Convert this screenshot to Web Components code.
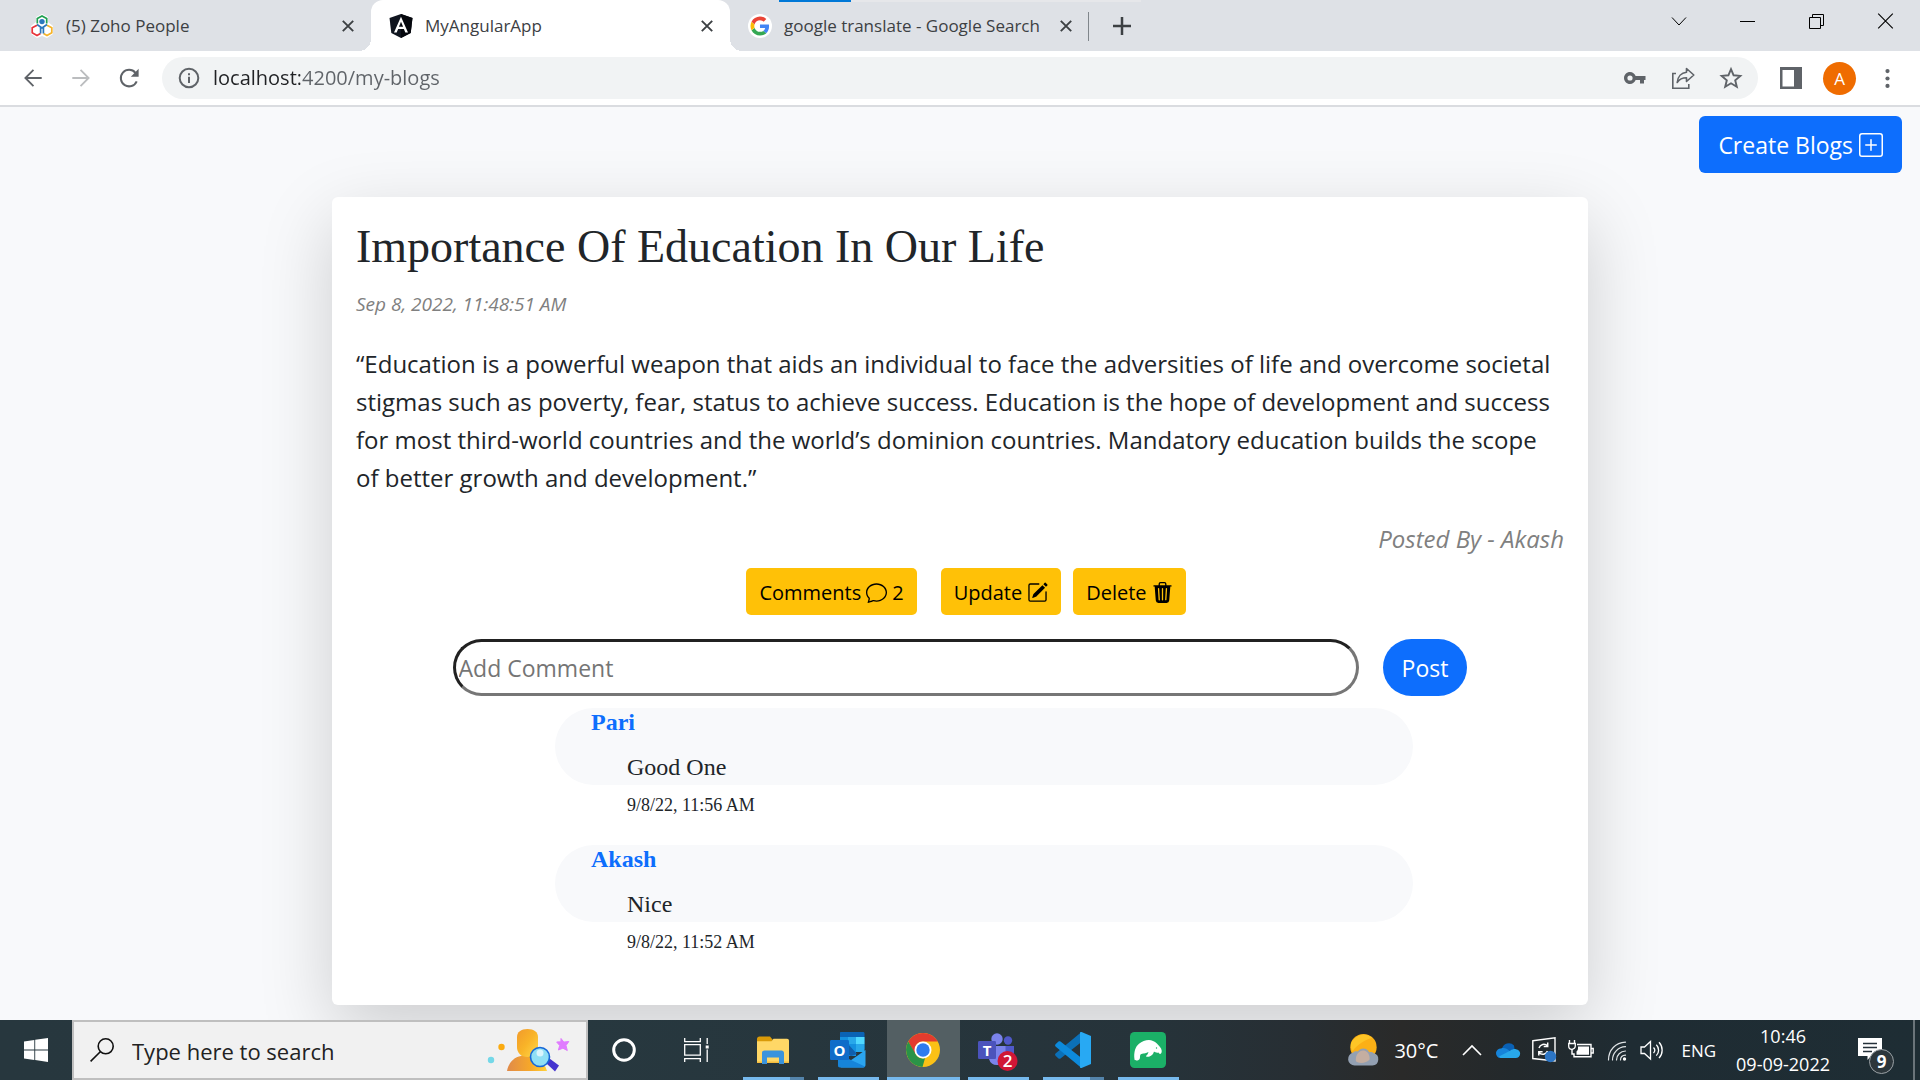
<!DOCTYPE html>
<html lang="en">
<head>
<meta charset="utf-8">
<title>MyAngularApp</title>
<style>
  html, body { margin: 0; height: 100%; }
  body { font-family: "Open Sans", "Noto Sans", sans-serif; color: #212529; background: #f8f9fb; }
</style>
</head>
<body>
<desktop-screen>
  <browser-tabs slot="chrome">
    <browser-tab icon="zoho">(5) Zoho People</browser-tab>
    <browser-tab icon="angular" active>MyAngularApp</browser-tab>
    <browser-tab icon="google" last>google translate - Google Search</browser-tab>
  </browser-tabs>
  <browser-toolbar slot="chrome" url="localhost:4200/my-blogs"></browser-toolbar>
  <blog-page>
    <blog-card heading="Importance Of Education In Our Life" date="Sep 8, 2022, 11:48:51 AM" author="Akash" count="2">
      “Education is a powerful weapon that aids an individual to face the adversities of life and overcome societal stigmas such as poverty, fear, status to achieve success. Education is the hope of development and success for most third-world countries and the world’s dominion countries. Mandatory education builds the scope of better growth and development.”
      <comment-item slot="comments" author="Pari" date="9/8/22, 11:56 AM">Good One</comment-item>
      <comment-item slot="comments" author="Akash" date="9/8/22, 11:52 AM">Nice</comment-item>
    </blog-card>
  </blog-page>
  <task-bar slot="taskbar">
    <task-app icon="explorer" label="File Explorer" stacked></task-app>
    <task-app icon="outlook" label="Outlook"></task-app>
    <task-app icon="chrome" label="Google Chrome" active></task-app>
    <task-app icon="teams" label="Teams"></task-app>
    <task-app icon="vscode" label="Visual Studio Code" stacked></task-app>
    <task-app icon="manatee" label="Tracker"></task-app>
  </task-bar>
</desktop-screen>

<script>
// Each entry: [viewBox width, viewBox height, markup]
const ICONS = {
  plusSquare: [16, 16, `<g fill="currentColor"><path d="M14 1a1 1 0 0 1 1 1v12a1 1 0 0 1-1 1H2a1 1 0 0 1-1-1V2a1 1 0 0 1 1-1h12zM2 0a2 2 0 0 0-2 2v12a2 2 0 0 0 2 2h12a2 2 0 0 0 2-2V2a2 2 0 0 0-2-2H2z"/><path d="M8 4a.5.5 0 0 1 .5.5v3h3a.5.5 0 0 1 0 1h-3v3a.5.5 0 0 1-1 0v-3h-3a.5.5 0 0 1 0-1h3v-3A.5.5 0 0 1 8 4z"/></g>`],
  chat: [16, 16, `<path fill="currentColor" d="M2.678 11.894a1 1 0 0 1 .287.801 10.97 10.97 0 0 1-.398 2c1.395-.323 2.247-.697 2.634-.893a1 1 0 0 1 .71-.074A8.06 8.06 0 0 0 8 14c3.996 0 7-2.807 7-6 0-3.192-3.004-6-7-6S1 4.808 1 8c0 1.468.617 2.83 1.678 3.894zm-.493 3.905a21.682 21.682 0 0 1-.713.129c-.2.032-.352-.176-.273-.362a9.68 9.68 0 0 0 .244-.637l.003-.01c.248-.72.45-1.548.524-2.319C.743 11.37 0 9.76 0 8c0-3.866 3.582-7 8-7s8 3.134 8 7-3.582 7-8 7a9.06 9.06 0 0 1-2.347-.306c-.52.263-1.639.742-3.468 1.105z"/>`],
  pencil: [16, 16, `<g fill="currentColor"><path d="M15.502 1.94a.5.5 0 0 1 0 .706L14.459 3.69l-2-2L13.502.646a.5.5 0 0 1 .707 0l1.293 1.293zm-1.75 2.456-2-2L4.939 9.21a.5.5 0 0 0-.121.196l-.805 2.414a.25.25 0 0 0 .316.316l2.414-.805a.5.5 0 0 0 .196-.12l6.813-6.814z"/><path d="M1 13.5A1.5 1.5 0 0 0 2.5 15h11a1.5 1.5 0 0 0 1.5-1.5v-6a.5.5 0 0 0-1 0v6a.5.5 0 0 1-.5.5h-11a.5.5 0 0 1-.5-.5v-11a.5.5 0 0 1 .5-.5H9a.5.5 0 0 0 0-1H2.5A1.5 1.5 0 0 0 1 2.5v11z"/></g>`],
  trash: [16, 16, `<path fill="currentColor" d="M11 1.5v1h3.5a.5.5 0 0 1 0 1h-.538l-.853 10.66A2 2 0 0 1 11.115 16h-6.23a2 2 0 0 1-1.994-1.84L2.038 3.5H1.5a.5.5 0 0 1 0-1H5v-1A1.5 1.5 0 0 1 6.5 0h3A1.5 1.5 0 0 1 11 1.5Zm-5 0v1h4v-1a.5.5 0 0 0-.5-.5h-3a.5.5 0 0 0-.5.5ZM4.5 5.029l.5 8.5a.5.5 0 1 0 .998-.06l-.5-8.5a.5.5 0 1 0-.998.06Zm6.53-.528a.5.5 0 0 0-.528.47l-.5 8.5a.5.5 0 0 0 .998.058l.5-8.5a.5.5 0 0 0-.47-.528ZM8 4.5a.5.5 0 0 0-.5.5v8.5a.5.5 0 0 0 1 0V5a.5.5 0 0 0-.5-.5Z"/>`],
  back: [24, 24, `<path fill="none" stroke="currentColor" stroke-width="2" d="M21.500 12H4M12.500 3.200L3.700 12l8.800 8.800"/>`],
  forward: [24, 24, `<path fill="none" stroke="currentColor" stroke-width="2" d="M2.500 12H20M11.500 3.200l8.800 8.800-8.800 8.800"/>`],
  reload: [24, 24, `<path fill="none" stroke="currentColor" stroke-width="2.200" d="M20.400 15.600A9 9 0 1 1 19 6.300"/><path fill="currentColor" d="M22.500 2v8.500H14z"/>`],
  info: [22, 22, `<circle cx="11" cy="11" r="9.300" fill="none" stroke="currentColor" stroke-width="2"/><path fill="currentColor" d="M10 9.800h2V16h-2zM10 6.200h2v2h-2z"/>`],
  key: [24, 24, `<path fill="currentColor" fill-rule="evenodd" d="M12.650 10C11.830 7.670 9.610 6 7 6c-3.310 0-6 2.690-6 6s2.690 6 6 6c2.610 0 4.830-1.670 5.650-4H17v3.500h4V14h1.500v-4H12.650zM7 14.600a2.600 2.600 0 1 1 0-5.200 2.600 2.600 0 0 1 0 5.200z"/>`],
  share: [24, 24, `<g fill="none" stroke="currentColor" stroke-width="1.600"><path d="M5 7.500H1.800v14.700h16V18"/><path stroke-linejoin="round" d="M15.500 2.500l7.300 6.500-7.300 6.500v-3.700C10.500 11.800 8 13.800 6.200 16.500 6.700 10.500 10.500 6.700 15.500 6.200z"/></g>`],
  star: [24, 24, `<path fill="none" stroke="currentColor" stroke-width="1.900" d="M12 3.200l2.600 6.100 6.700.6-5.100 4.400 1.600 6.500L12 17.300l-5.800 3.500 1.600-6.500-5.100-4.400 6.700-.6z"/>`],
  panel: [24, 24, `<path fill="currentColor" fill-rule="evenodd" d="M1 1h22v22H1zM3.500 4v16.500H15V4z"/>`],
  dots: [24, 24, `<g fill="currentColor"><circle cx="12" cy="3.500" r="2.400"/><circle cx="12" cy="12" r="2.400"/><circle cx="12" cy="20.500" r="2.400"/></g>`],
  close: [12, 12, `<path fill="none" stroke="currentColor" stroke-width="1.900" d="M.8.8l10.400 10.400M11.200.8L.8 11.200"/>`],
  plus: [18, 18, `<path fill="none" stroke="currentColor" stroke-width="2.500" d="M9 0v18M0 9h18"/>`],
  winMore: [16, 16, `<path fill="none" stroke="currentColor" stroke-width="1" d="M1 4.500l7 7.500 7-7.500"/>`],
  winMin: [16, 16, `<path fill="none" stroke="currentColor" d="M0 8.500h15"/>`],
  winRestore: [16, 16, `<path fill="none" stroke="currentColor" d="M.5 4.500h11v11H.5zM3.500 4.500v-3h11v11h-3"/>`],
  winClose: [16, 16, `<path fill="none" stroke="currentColor" stroke-width="1.100" d="M.2.700l14.600 14.600M14.800.700L.2 15.300"/>`],
  zoho: [24, 24, `<path fill="#fff" d="M12 0l6 3v5l5 4v8l-6 4-5-2-5 2-6-4v-8l5-4V3z"/><g fill="none" stroke-width="1.700"><path stroke="#1fa050" d="M7.300 9.500V4.600L12 2l4.700 2.600v4.900"/><path stroke="#e8333a" d="M7 11.200l-4.800 2.500v5L7 21.500l3.500-2"/><path stroke="#f6b42a" d="M17 11.200l4.800 2.500v5L17 21.500l-3.500-2"/><path stroke="#2b78bd" d="M7 10.500l5 3.500 5-3.500M10.600 13.500v6M13.400 13.500v6"/></g><circle cx="12" cy="7.600" r="2.700" fill="#2b78bd"/>`],
  angular: [24, 24, `<path fill="#10151f" d="M12 0l11.500 4-1.800 15L12 24l-9.700-5L.5 4z"/><path fill="#05070d" d="M12 0l11.500 4-1.800 15L12 24z"/><path fill="#fff" fill-rule="evenodd" d="M12 2.800L5 18.400h2.700l1.400-3.500h5.800l1.400 3.500H19zm0 5l2.100 4.900H9.900z"/>`],
  google: [24, 24, `<circle cx="12" cy="12" r="12" fill="#fff"/><g transform="translate(2.500 2.500) scale(.79)"><path fill="#4285f4" d="M23.500 12.300c0-.9-.1-1.500-.2-2.300H12v4.500h6.500c-.1 1.100-.8 2.800-2.400 3.900l3.700 2.900c2.300-2.100 3.700-5.200 3.700-9z"/><path fill="#34a853" d="M12 24c3.200 0 6-1.100 8-2.900l-3.900-2.900c-1 .7-2.400 1.200-4.100 1.200-3.200 0-5.900-2.100-6.800-5L1.300 17.300C3.300 21.300 7.300 24 12 24z"/><path fill="#fbbc05" d="M5.200 14.300c-.3-.7-.4-1.500-.4-2.300s.2-1.600.4-2.300L1.300 6.600C.5 8.200 0 10 0 12s.5 3.800 1.300 5.400z"/><path fill="#ea4335" d="M12 4.700c2.300 0 3.800 1 4.700 1.800L20 3.200C18 1.200 15.200 0 12 0 7.300 0 3.300 2.700 1.300 6.600l3.900 3.100c1-2.900 3.600-5 6.800-5z"/></g>`],
  windows: [24, 24, `<path fill="#fff" d="M0 3.400l10.300-1.500v9.600H0zM11.200 1.700L24 0v11.500H11.200zM0 12.400h10.300V22L0 20.600zM11.200 12.400H24V24l-12.800-1.900z"/>`],
  search: [24, 24, `<g fill="none" stroke="#111" stroke-width="1.600"><circle cx="15.700" cy="8.300" r="7.500"/><path d="M10.300 13.700L.6 23.400"/></g>`],
  assistant: [84, 44, `<defs><linearGradient id="g1" x1="0" x2="1" y1="0" y2="1"><stop offset="0" stop-color="#f19a2c"/><stop offset=".5" stop-color="#f9b428"/><stop offset="1" stop-color="#ffd84a"/></linearGradient><linearGradient id="g2" x1="0" x2="1"><stop offset="0" stop-color="#e08a4a"/><stop offset=".6" stop-color="#f7a928"/><stop offset="1" stop-color="#ffd23c"/></linearGradient></defs><path fill="url(#g2)" d="M20 43c1.500-8 7-14 14-15 3-2 8-2 11 0 7 2 13 7 15 15z"/><path fill="url(#g1)" d="M30 9c0-5 4-8 10.500-8S51 4 51 9v10c0 6-4 10-10.500 10S30 25 30 19z"/><circle cx="4" cy="32" r="3.200" fill="#74d8e8"/><circle cx="14.500" cy="19" r="3.200" fill="#fbab10"/><path fill="#4534cf" d="M59 35l3.500-4.500 9.500 7-4 6z"/><circle cx="53" cy="29" r="9.500" fill="#8fdff5" stroke="#1668d8" stroke-width="1.600"/><circle cx="53" cy="25" r="3.500" fill="#d9f5fd"/><path fill="#e07bff" stroke="#e07bff" stroke-linejoin="round" d="M74 10.500l2.800 3.600 5-.6-2.800 4 1.300 5-4.400-2.300-4.500 1.800 1.300-4.500-3-3.500 4.200-.2z"/>`],
  cortana: [24, 24, `<circle cx="12" cy="12" r="10.300" fill="none" stroke="#fff" stroke-width="3"/>`],
  taskview: [24, 24, `<path fill="none" stroke="#fff" stroke-width="1.300" d="M.7 0v3.600h15.600V0M.7 6.700h15.600v10.500H.7zM.7 24v-3.300h15.600V24M23.200 0v6M23.200 11.500V24"/><path fill="#fff" d="M21.700 7.500h3v3h-3z"/>`],
  explorer: [36, 36, `<path fill="#d99a08" d="M2 7c0-1.500 1-2.500 2.500-2.500H15l2.500 3V14H2z"/><path fill="#ffd766" d="M2 9.300h14.500l2-2.500H32c1.200 0 2 .8 2 2V31H2z"/><path fill="#f5bd3e" d="M2 29.500h32V31H2z"/><path fill="#3a93dc" d="M7 32V21c0-1.500 1-2.500 2.500-2.500h17c1.500 0 2.500 1 2.500 2.500v11h-5v-6.500H12V32z"/>`],
  outlook: [36, 36, `<path fill="#0a63b5" d="M11 0h22c1 0 1.500.5 1.500 1.500V17H10V1.500C10 .5 10 0 11 0z"/><path fill="#1490df" d="M10 5h8v7h-8z"/><path fill="#28a8ea" d="M18 5h8v7h-8z"/><path fill="#50d9ff" d="M26 5h8.500v7H26z"/><path fill="#0f78d4" d="M10 12h8v12h-8z"/><path fill="#1490df" d="M18 12h8v12h-8z"/><path fill="#28a8ea" d="M26 12h8.500v8H26z"/><path fill="#0f5fae" d="M18 12l9 10-6 2-8-4z"/><path fill="#2ba5f0" d="M35.500 18v15c0 1.500-1 2.500-2.500 2.500H10.500z"/><path fill="#1684da" d="M8 22l27 12.500c-.5.700-1 1-2 1H10c-1.500 0-2-1-2-2z"/><path fill="#0f6cc9" d="M1.500 8h16c1 0 1.500.5 1.500 1.500v17c0 1-.5 1.500-1.500 1.500h-16C.5 28 0 27.500 0 26.500v-17C0 8.500.5 8 1.500 8z"/><text x="9.500" y="23.500" text-anchor="middle" font-family="Open Sans, sans-serif" font-weight="700" font-size="15" fill="#fff">O</text>`],
  chrome: [36, 36, `<circle cx="18" cy="18" r="17" fill="#fbc116"/><path fill="#e33b2e" d="M3.300 9.500a17 17 0 0 1 29.400 0H18a8.500 8.500 0 0 0-7.400 4.300L10 22z"/><path fill="#2a9347" d="M3.300 9.500l7.400 12.700A8.500 8.500 0 0 0 18 26.500l2-.3L17.500 35A17 17 0 0 1 3.300 9.500z"/><circle cx="18" cy="18" r="8.500" fill="#fff"/><circle cx="18" cy="18" r="6.700" fill="#2f7bee"/>`],
  teams: [40, 40, `<circle cx="30" cy="10.500" r="4.200" fill="#5059c9"/><path fill="#5059c9" d="M25 16h11V26a6 6 0 0 1-11 2z"/><circle cx="19" cy="9" r="5.700" fill="#7b83eb"/><path fill="#7b83eb" d="M11 16h16.500v12a8.500 8.500 0 0 1-16.500 1z"/><path fill="#4b53bc" d="M1.500 11h15c1 0 1.500.5 1.500 1.500v15c0 1-.5 1.500-1.500 1.500h-15C.5 29 0 28.500 0 27.500v-15C0 11.500.5 11 1.500 11z"/><text x="9" y="25.500" text-anchor="middle" font-family="Open Sans, sans-serif" font-weight="700" font-size="15" fill="#fff">T</text><circle cx="29.500" cy="31" r="10" fill="#d01636"/><text x="29.500" y="37" text-anchor="middle" font-family="Open Sans, sans-serif" font-weight="600" font-size="17" fill="#fff">2</text>`],
  vscode: [36, 36, `<path fill="#0b70b8" d="M26.500 0v10L5.500 26.500c-.8.500-1.500.4-2 0L.8 24c-1-.8-1-1.800 0-2.700z"/><path fill="#0d8adb" d="M.8 12c-1 .8-1 1.900 0 2.700L26.500 36V26L5.500 9.500c-.8-.5-1.500-.4-2 0z"/><path fill="#28a9f3" d="M26.500 0L36 4v28l-9.500 4c-1 .3-1.500-.2-1.500-1V1c0-.8.500-1.300 1.500-1z"/>`],
  manatee: [36, 36, `<rect width="36" height="36" rx="4.500" fill="#1bb067"/><path fill="#fff" d="M4.500 27.500C3.500 20 5.500 14.500 9 11.800 13 8.500 19 7 23 9c3 1.200 5 3.500 7 6s2.300 5 1 6.500c-1 1-2 0-2.500-1-1.500.5-3.500 0-4.500-1-.5 2.500-2.500 4.500-4.500 5-1.500.500-3.500.5-3.500-.5 1-1 2-2 2.500-4-3.500 2-5.500 1-8 2.500-1 1.500 0 3-1 4.700-1 1.300-4.500 1.800-5 .3z"/><circle cx="26.500" cy="16" r=".7" fill="#1bb067"/>`],
  weather: [34, 34, `<circle cx="17.500" cy="14" r="14" fill="#fbb016"/><path fill="#ffcf2e" d="M8 5a14 14 0 0 1 19-1C20 6 12 10 6 18 2.500 13 4 8 8 5z" opacity=".7"/><path fill="#93a0b2" d="M8 33.500a7 7 0 0 1-1.500-13.800C8 18 10 18 11.500 18.500c3-4.500 10-4 12 .8 1.500-.5 3.500-.2 4.500.8A6.800 6.800 0 0 1 27 33.500z"/><path fill="#d9b49a" d="M9.500 29c-1-8 5-13 10-11 3 1 5 5 4.500 9-3 4-11 5-14.500 2z" opacity=".7"/>`],
  chevronUp: [20, 20, `<path fill="none" stroke="#fff" stroke-width="1.600" d="M1 15l9-9 9 9"/>`],
  onedrive: [24, 24, `<path fill="#0a61b5" d="M6 11a7 7 0 0 1 12-3.500L19 14 4 16z"/><path fill="#1684da" d="M4.500 20A4.700 4.700 0 0 1 5 10.500c3-1 6 0 8 2l6 7z"/><path fill="#28a8ea" d="M4.500 20h15a4.400 4.400 0 0 0 .5-8.800c-2-.3-4 .3-5.500 1.300L3 18.500z"/>`],
  update: [24, 26, `<path fill="none" stroke="#fff" stroke-width="1.400" d="M.8 3.800L23 .9v23L.8 21.500z"/><path fill="none" stroke="#fff" stroke-width="1.500" d="M7 11a5 5 0 0 1 8.500-2M15.700 5.500v4h-4M15.500 14a5 5 0 0 1-8.500 1.500M6.800 18.500v-3.800h3.800"/><circle cx="18.500" cy="19.500" r="5.700" fill="#2c75c4"/>`],
  battery: [26, 20, `<path fill="none" stroke="#fff" stroke-width="1.400" d="M9 4.500h14v12.300H6v-3.500M23.500 8.500h1.700v4.500h-1.700M1.500 0v3M6.500 0v3M4 9v5h2"/><path fill="#fff" d="M10 6.500h11v8.300H8.500V11.500c1-.8 1.500-2 1.500-3z"/><path fill="none" stroke="#fff" stroke-width="1.300" d="M.7 3.500h6.600V6a3.300 3.300 0 0 1-6.600 0z"/>`],
  wifi: [22, 22, `<g fill="none" stroke="#dfe3e5" stroke-width="1.200" stroke-linecap="round"><path d="M2.500 21C2.500 11 9.500 3.500 19.500 3.200"/><path d="M6.500 21c0-7 5.500-13 13-13.300"/><path d="M10.500 21c0-5 4-8.800 9-9"/><path d="M14.500 21c0-2.800 2-4.600 5-4.800"/></g><circle cx="18.500" cy="20" r="1.700" fill="#fff"/>`],
  volume: [24, 20, `<g fill="none" stroke="#fff" stroke-width="1.300"><path d="M1 7v6.500h3.500l6 5.500V1.500L4.500 7z"/><path d="M13.500 7.500a4 4 0 0 1 0 5.500M16.300 4.800a7.500 7.500 0 0 1 0 10.800M19 2.300a11.500 11.500 0 0 1 0 15.800"/></g>`],
  notify: [38, 50, `<g transform="translate(0 12)"><path fill="#fff" d="M0 1h24v18H13l-3.500 4v-4H0z"/><path stroke="#25313a" stroke-width="1.400" d="M5 6.500h14M5 10.500h14M5 14.500h9"/><circle cx="23.500" cy="24.500" r="12" fill="#2c363b" stroke="#9aa1a5"/><text x="23.500" y="30.500" text-anchor="middle" font-family="Open Sans, sans-serif" font-weight="700" font-size="17" fill="#fff">9</text></g>`]
};

class ShadowElement extends HTMLElement {
  connectedCallback() {
    if (this.shadowRoot) return;
    const t = document.createElement('template');
    t.innerHTML = '<style>*{box-sizing:border-box}button{font:inherit;color:inherit;border:0;background:none;padding:0;margin:0;display:flex;align-items:center;justify-content:center}input{font:inherit;margin:0;min-width:0}</style>' + this.render();
    this.attachShadow({ mode: 'open' }).append(t.content.cloneNode(true));
  }
  attr(name) { return this.getAttribute(name) || ''; }
}

customElements.define('ui-icon', class extends ShadowElement {
  render() {
    const [w, h, body] = ICONS[this.attr('name')];
    const width = Number(this.attr('size')) || w;
    return `<style>:host{display:block;flex:none}svg{display:block;overflow:visible}</style>
      <svg width="${width}" height="${Math.round(width * h / w)}" viewBox="0 0 ${w} ${h}" aria-hidden="true">${body}</svg>`;
  }
});

customElements.define('desktop-screen', class extends ShadowElement {
  render() {
    return `<style>
      :host{display:flex;flex-direction:column;min-height:100vh}
      main{flex:1;display:flex;flex-direction:column;overflow:hidden}
    </style><slot name="chrome"></slot><main><slot></slot></main><slot name="taskbar"></slot>`;
  }
});

customElements.define('browser-tabs', class extends ShadowElement {
  render() {
    return `<style>
      :host{display:flex;height:51px;background:#dee1e6;color:#3c4043;position:relative}
      .loading{position:absolute;top:0;left:779px;width:362px;height:2px;background:#e6e7ea}
      .loading i{display:block;width:72px;height:2px;background:#0078d7}
      .strip{display:flex;flex:1;padding-left:12px;min-width:0}
      .new{width:66px}
      .win{display:flex;height:42px;color:#000}
      .win button{width:69px}
    </style>
    <div class="strip"><slot></slot><button class="new" aria-label="New tab"><ui-icon name="plus"></ui-icon></button></div>
    <div class="win">
      <button aria-label="Search tabs"><ui-icon name="winMore"></ui-icon></button>
      <button aria-label="Minimize"><ui-icon name="winMin"></ui-icon></button>
      <button aria-label="Restore"><ui-icon name="winRestore"></ui-icon></button>
      <button aria-label="Close"><ui-icon name="winClose"></ui-icon></button>
    </div>
    <div class="loading"><i></i></div>`;
  }
});

customElements.define('browser-tab', class extends ShadowElement {
  render() {
    return `<style>
      :host{display:flex;align-items:center;width:359px;padding:0 17px 0 18px;gap:12px;font-size:17px;line-height:24px;position:relative;box-sizing:border-box}
      :host(:not([last])){padding-right:5px}
      :host([last]) span{margin-right:-1px}
      :host([active]){background:#fff;border-radius:12px 12px 0 0}
      :host([active])::before,:host([active])::after{content:"";position:absolute;bottom:0;width:12px;height:12px}
      :host([active])::before{left:-12px;background:radial-gradient(circle at 0 0,transparent 12px,#fff 12px)}
      :host([active])::after{right:-12px;background:radial-gradient(circle at 100% 0,transparent 12px,#fff 12px)}
      :host([last]) .rule{position:absolute;right:0;top:12px;width:1px;height:29px;background:#80868b}
      span{flex:1;white-space:nowrap}
    </style>
    <ui-icon name="${this.attr('icon')}"></ui-icon><span><slot></slot></span>
    <button aria-label="Close tab"><ui-icon name="close"></ui-icon></button><div class="rule"></div>`;
  }
});

customElements.define('browser-toolbar', class extends ShadowElement {
  render() {
    return `<style>
      :host{display:flex;align-items:center;height:56px;box-sizing:border-box;padding:0 10px 0 9px;background:#fff;border-bottom:2px solid #dadce0;color:#5f6368}
      .nav{width:48px;height:42px}
      .off{color:#bbbdbf}
      .box{flex:1;display:flex;align-items:center;height:42px;margin-left:9px;padding-left:16px;border-radius:21px;background:#f1f3f4}
      .box input{flex:1;border:0;outline:0;padding:0;margin-left:13px;font-size:20px;line-height:30px;
        -webkit-text-fill-color:transparent;background:linear-gradient(90deg,#202124 87px,#5f6368 87px);-webkit-background-clip:text;background-clip:text}
      .avatar{width:33px;height:33px;border-radius:50%;background:#ef6c00;color:#fff;font-size:17px;margin:0 8px}
      .box .nav:last-child{margin-right:3px}
      .panel{margin-left:9px}
      .menu{width:46px}
    </style>
    <button class="nav" aria-label="Back"><ui-icon name="back" size="22"></ui-icon></button>
    <button class="nav off" aria-label="Forward"><ui-icon name="forward" size="22"></ui-icon></button>
    <button class="nav" aria-label="Reload"><ui-icon name="reload" size="22"></ui-icon></button>
    <div class="box"><ui-icon name="info"></ui-icon>
      <input type="text" aria-label="Address" value="${this.attr('url')}">
      <button class="nav" aria-label="Passwords"><ui-icon name="key"></ui-icon></button>
      <button class="nav" aria-label="Share"><ui-icon name="share"></ui-icon></button>
      <button class="nav" aria-label="Bookmark"><ui-icon name="star"></ui-icon></button>
    </div>
    <button class="nav panel" aria-label="Side panel"><ui-icon name="panel" size="24"></ui-icon></button>
    <button class="avatar" aria-label="Profile">A</button>
    <button class="nav menu" aria-label="Menu"><ui-icon name="dots" size="21"></ui-icon></button>`;
  }
});

customElements.define('app-button', class extends ShadowElement {
  render() {
    return `<style>
      :host{display:block;flex:none}
      button{gap:6px;height:57px;padding:1px 19px 0;border-radius:6px;background:#0d6efd;color:#fff;font-size:23px;white-space:nowrap}
      :host([kind=warning]) button{gap:5px;height:47px;padding:1px 13px 0;background:#ffc107;color:#000;font-size:20px;border-radius:5px}
      :host([pill]) button{border-radius:29px}
    </style><button type="button"><slot></slot></button>`;
  }
});

customElements.define('blog-page', class extends ShadowElement {
  render() {
    return `<style>
      :host{display:flex;flex-direction:column;padding:9px 18px 15px;gap:24px}
      .top{display:flex;justify-content:flex-end}
    </style>
    <div class="top"><app-button>Create Blogs<ui-icon name="plusSquare" size="24"></ui-icon></app-button></div>
    <slot></slot>`;
  }
});

customElements.define('blog-card', class extends ShadowElement {
  render() {
    return `<style>
      :host{display:block;box-sizing:border-box;width:66.667%;align-self:center;padding:25px 24px 49px;background:#fff;border-radius:6px;box-shadow:0 24px 72px rgba(0,0,0,.175)}
      h1{margin:0;font:400 46px/50px "Liberation Serif",serif}
      .date{margin-top:18px;font-size:19px;line-height:28px;font-style:italic;color:#808080}
      p{margin:27px 0 24px;font-size:24px;line-height:38px}
      .by{font-size:24px;line-height:36px;font-style:italic;color:#808080;text-align:right}
      .actions{display:flex;justify-content:center;margin-top:11px;gap:12px;padding-left:12px}
      .actions app-button:first-child{margin-right:12px}
      form{display:flex;justify-content:center;gap:24px;margin-top:24px}
      input{width:75%;height:57px;padding:0 3px;border:3px inset #767676;border-radius:29px;font-size:23px;background:#fff;color:#212529}
      input::placeholder{color:#757575;opacity:1}
      .list{display:flex;flex-direction:column;gap:26px;width:75%;margin:12px auto 0;padding-left:48px}
    </style>
    <h1>${this.attr('heading')}</h1>
    <div class="date">${this.attr('date')}</div>
    <p><slot></slot></p>
    <div class="by">Posted By - ${this.attr('author')}</div>
    <div class="actions">
      <app-button kind="warning">Comments<ui-icon name="chat" size="21"></ui-icon>${this.attr('count')}</app-button>
      <app-button kind="warning">Update<ui-icon name="pencil" size="21"></ui-icon></app-button>
      <app-button kind="warning">Delete<ui-icon name="trash" size="21"></ui-icon></app-button>
    </div>
    <form><input type="text" aria-label="Add Comment" placeholder="Add Comment"><app-button pill>Post</app-button></form>
    <div class="list"><slot name="comments"></slot></div>`;
  }
});

customElements.define('comment-item', class extends ShadowElement {
  render() {
    return `<style>
      :host{display:block;font-family:"Liberation Serif",serif}
      .pill{background:#f8f9fb;border-radius:39px;padding:0 36px}
      .name{font-size:24px;line-height:28px;font-weight:700;color:#0d6efd}
      .body{margin:13px 0 0 36px;font-size:24px;line-height:36px}
      .date{margin:6px 0 0 72px;font-size:18px;line-height:28px}
    </style>
    <div class="pill"><div class="name">${this.attr('author')}</div><div class="body"><slot></slot></div></div>
    <div class="date">${this.attr('date')}</div>`;
  }
});

customElements.define('task-bar', class extends ShadowElement {
  render() {
    return `<style>
      :host{display:flex;height:60px;background:linear-gradient(90deg,#27373e 0,#27383f 30%,#26333a 60%,#272e33 68%,#2a2a29 73%,#23292c 79%,#1f2c33 85%,#1e2d34 100%);color:#fff}
      .start,.cell{width:72px}
      .search{display:flex;align-items:center;width:516px;padding:0 15px 0 16px;border:2px solid #bfbfbf;background:#f1f1f1}
      .search input{flex:1;border:0;outline:0;background:none;padding:2px 0 0;margin-left:18px;font-size:22px;line-height:30px;color:#222}
      .search input::placeholder{color:#222;opacity:1}
      .apps{display:flex;gap:2px;padding-left:5px}
      .tray{display:flex;flex:1;align-items:center;justify-content:flex-end}
      .weather{gap:15px;font-size:20px;margin-right:24px}
      .small{display:flex;align-items:center;gap:12px;margin:0 17px 0 14px}
      .lang{font-size:17px}
      .clock{display:flex;flex-direction:column;font-size:18px;line-height:28px;margin:0 28px 0 20px}
      .end{width:7px;height:60px;border-left:2px solid #6a747a;margin-left:17px}
    </style>
    <button class="start" aria-label="Start"><ui-icon name="windows"></ui-icon></button>
    <div class="search"><ui-icon name="search"></ui-icon><input type="text" aria-label="Search" placeholder="Type here to search"><ui-icon name="assistant"></ui-icon></div>
    <button class="cell" aria-label="Cortana"><ui-icon name="cortana"></ui-icon></button>
    <button class="cell" aria-label="Task view"><ui-icon name="taskview"></ui-icon></button>
    <div class="apps"><slot></slot></div>
    <div class="tray">
      <button class="weather"><ui-icon name="weather" size="32"></ui-icon>30°C</button>
      <button aria-label="Hidden icons"><ui-icon name="chevronUp"></ui-icon></button>
      <div class="small"><ui-icon name="onedrive"></ui-icon><ui-icon name="update"></ui-icon><ui-icon name="battery"></ui-icon><ui-icon name="wifi"></ui-icon><ui-icon name="volume"></ui-icon></div>
      <button class="lang">ENG</button>
      <button class="clock"><span>10:46</span><span>09-09-2022</span></button>
      <button aria-label="Notifications"><ui-icon name="notify"></ui-icon></button>
      <div class="end"></div>
    </div>`;
  }
});

customElements.define('task-app', class extends ShadowElement {
  render() {
    return `<style>
      :host{display:block;width:73px;height:60px;position:relative}
      button{width:100%;height:100%;padding-right:1px}
      .bar{position:absolute;left:6px;right:6px;bottom:0;height:3px;background:#76b9ed}
      :host([stacked]) .bar{background:linear-gradient(90deg,#76b9ed 47px,#5484ab 47px)}
      :host([active]){background:#535f63}
      :host([active]) .bar{left:0;right:0}
    </style><button aria-label="${this.attr('label')}"><ui-icon name="${this.attr('icon')}"></ui-icon></button><div class="bar"></div>`;
  }
});
</script>
</body>
</html>
